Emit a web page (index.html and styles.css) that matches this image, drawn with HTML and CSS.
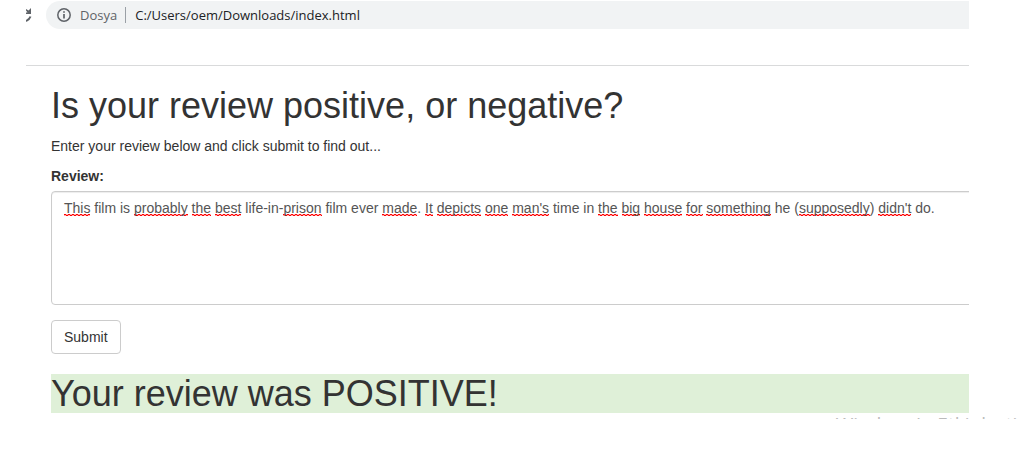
FILE: index.html
```html
<!DOCTYPE html>
<html lang="en">
<head>
<meta charset="utf-8">
<title>Review sentiment</title>
<link rel="stylesheet" href="styles.css">
</head>
<body>
<div class="window">
  <header class="toolbar">
    <svg class="reload" width="6" height="14" viewBox="0 0 6 14" aria-hidden="true">
      <path d="M0 1 2.500 2.500 5 0V6H0V4.500H1.500L0 2.500Z" fill="#5f6368"/>
      <path d="M4.500 8.500Q3.500 11.500 0 13" fill="none" stroke="#5f6368" stroke-width="2"/>
    </svg>
    <div class="address">
      <svg class="info" width="14" height="14" viewBox="0 0 14 14" aria-hidden="true">
        <circle cx="7" cy="7" r="6.200" fill="none" stroke="#5f6368" stroke-width="1.500"/>
        <path d="M7 3.200V4.800M7 6V10.500" stroke="#5f6368" stroke-width="1.700"/>
      </svg>
      <span class="scheme">Dosya</span>
      <span class="url">C:/Users/oem/Downloads/index.html</span>
    </div>
  </header>
  <main class="page">
    <h1 class="heading">Is your review positive, or negative?</h1>
    <p class="intro">Enter your review below and click submit to find out...</p>
    <form class="form">
      <label class="label" for="review">Review:</label>
      <div class="editor">
        <div class="marks" aria-hidden="true"><u>This</u> film is <u>probably</u> <u>the</u> <u>best</u> life-in-<u>prison</u> film ever <u>made</u>. <u>It</u> <u>depicts</u> <u>one</u> <u>man's</u> time in <u>the</u> <u>big</u> <u>house</u> <u>for</u> <u>something</u> he (<u>supposedly</u>) <u>didn't</u> do.</div>
        <textarea class="field" id="review" rows="5" spellcheck="false">This film is probably the best life-in-prison film ever made. It depicts one man's time in the big house for something he (supposedly) didn't do.</textarea>
      </div>
      <button class="submit" type="button">Submit</button>
    </form>
    <h1 class="result">Your review was POSITIVE!</h1>
  </main>
</div>
<div class="watermark">Windows'u Etkinleştir</div>
</body>
</html>
```
FILE: styles.css
```css
* {
  box-sizing: border-box;
}

body {
  margin: 0;
  background: #fff;
  color: #333;
  font: 14px/20px "Liberation Sans", Arial, sans-serif;
  overflow-x: hidden;
}

.window {
  margin: 0 60px 0 26px;
  overflow: hidden;
}

.toolbar {
  display: flex;
  align-items: center;
  gap: 14px;
  padding: 1px 0 36px;
  border-bottom: 1px solid #d9dadb;
}

.address {
  display: flex;
  flex: 1;
  align-items: center;
  height: 28px;
  padding-left: 11px;
  border-radius: 14px 0 0 14px;
  background: #f1f3f4;
  font: 13px/16px "Open Sans", "Noto Sans", sans-serif;
}

.scheme {
  margin-left: 9px;
  padding-right: 8px;
  border-right: 1px solid #9aa0a6;
  color: #5f6368;
}

.url {
  margin-left: 9px;
  color: #202124;
}

.page {
  padding: 20px 0 0 25px;
}

.heading,
.result {
  margin: 0;
  font-size: 36px;
  font-weight: 400;
  line-height: 39px;
}

.intro {
  margin: 11px 0 10px;
}

.label {
  display: block;
  margin-bottom: 5px;
  font-weight: 700;
}

.editor {
  display: grid;
  margin: 0 -8px 15px 0;
}

.marks,
.field {
  grid-area: 1 / 1;
  width: 100%;
  margin: 0;
  padding: 6px 12px;
  border: 1px solid #ccc;
  border-radius: 4px;
  font: inherit;
  white-space: pre-wrap;
}

.marks {
  border-color: transparent;
  color: transparent;
}

.marks u {
  background:
    repeating-linear-gradient(90deg, #f00 0 2px, #faa 2px 4px) 0 calc(100% - 1px) / 100% 1px no-repeat,
    repeating-linear-gradient(90deg, #faa 0 2px, #f00 2px 4px) 0 100% / 100% 1px no-repeat;
  text-decoration: none;
}

.field {
  background: transparent;
  box-shadow: inset 0 1px 1px rgba(0, 0, 0, 0.075);
  color: #555;
  resize: none;
}

.submit {
  display: block;
  padding: 6px 12px;
  border: 1px solid #ccc;
  border-radius: 4px;
  background: #fff;
  color: #333;
  font: inherit;
}

.result {
  margin-top: 20px;
  background: #dff0d8;
}

.watermark {
  height: 6px;
  padding-right: 4px;
  overflow: hidden;
  color: #bbb;
  font: 19px/22px "Open Sans", "Noto Sans", sans-serif;
  text-align: right;
}
```
